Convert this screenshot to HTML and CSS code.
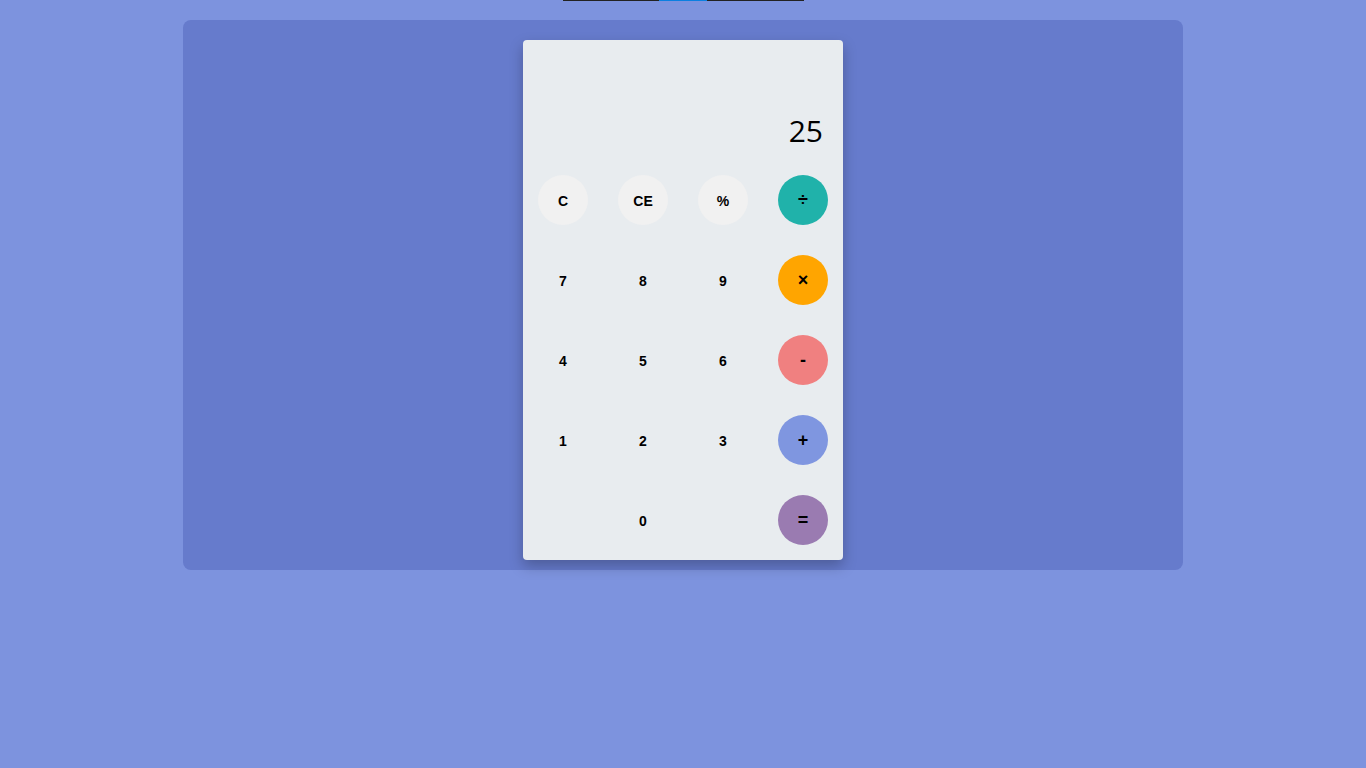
FILE: index.html
```html
<!DOCTYPE html>
<html>
<head>
<meta charset="utf-8">
<title>Calculator</title>
<link rel="stylesheet" href="styles.css">
</head>
<body>
<div class="topline"><span class="seg dark a"></span><span class="seg blue"></span><span class="seg dark b"></span></div>
<div class="wrap">
  <div class="calc">
    <div class="display">25</div>
    <div class="keys">
      <button class="key light">C</button>
      <button class="key light">CE</button>
      <button class="key light">%</button>
      <button class="key op div">÷</button>
      <button class="key">7</button>
      <button class="key">8</button>
      <button class="key">9</button>
      <button class="key op mul">×</button>
      <button class="key">4</button>
      <button class="key">5</button>
      <button class="key">6</button>
      <button class="key op sub">-</button>
      <button class="key">1</button>
      <button class="key">2</button>
      <button class="key">3</button>
      <button class="key op add">+</button>
      <span class="cell"></span>
      <button class="key">0</button>
      <span class="cell"></span>
      <button class="key op eq">=</button>
    </div>
  </div>
</div>
</body>
</html>
```
FILE: styles.css
```css
html, body {
  margin: 0;
  padding: 0;
}
body {
  background: #7d93de;
  font-family: "Liberation Sans", Arial, sans-serif;
  height: 768px;
  overflow: hidden;
}
.topline {
  display: flex;
  width: 241px;
  height: 1px;
  margin: 0 0 0 563px;
}
.seg { display: block; height: 1px; }
.seg.dark { background: #222; }
.seg.a { width: 96px; }
.seg.blue { width: 48px; background: #0b7fe0; }
.seg.b { width: 97px; }
.wrap {
  width: 1000px;
  height: 550px;
  box-sizing: border-box;
  margin: 19px auto 0;
  padding-top: 20px;
  background: #667bcc;
  border-radius: 8px;
  display: flex;
  justify-content: center;
  align-items: flex-start;
}
.calc {
  width: 320px;
  height: 520px;
  background: #e8ecef;
  border-radius: 4px;
  box-shadow: 0 6px 14px rgba(0, 0, 0, 0.25);
  display: flex;
  flex-direction: column;
}
.display {
  height: 120px;
  box-sizing: border-box;
  padding: 0 20px 14px;
  display: flex;
  justify-content: flex-end;
  align-items: flex-end;
  font-family: "Open Sans", sans-serif;
  font-size: 30px;
  line-height: 30px;
  color: #000;
}
.keys {
  display: grid;
  grid-template-columns: repeat(4, 80px);
  grid-auto-rows: 80px;
  justify-items: center;
  align-items: center;
}
.key {
  width: 50px;
  height: 50px;
  border: none;
  border-radius: 50%;
  background: transparent;
  padding: 2px 0 0;
  margin: 0;
  font-family: "Liberation Sans", Arial, sans-serif;
  font-weight: bold;
  font-size: 14px;
  color: #000;
  display: flex;
  align-items: center;
  justify-content: center;
}
.key.light { background: #f1f1f1; }
.key.op { font-size: 18px; padding-top: 0; }
.key.div { background: #20b2aa; }
.key.mul { background: #ffa500; }
.key.sub { background: #f08080; }
.key.add { background: #7f96e0; }
.key.eq { background: #9a7bb1; }
```
